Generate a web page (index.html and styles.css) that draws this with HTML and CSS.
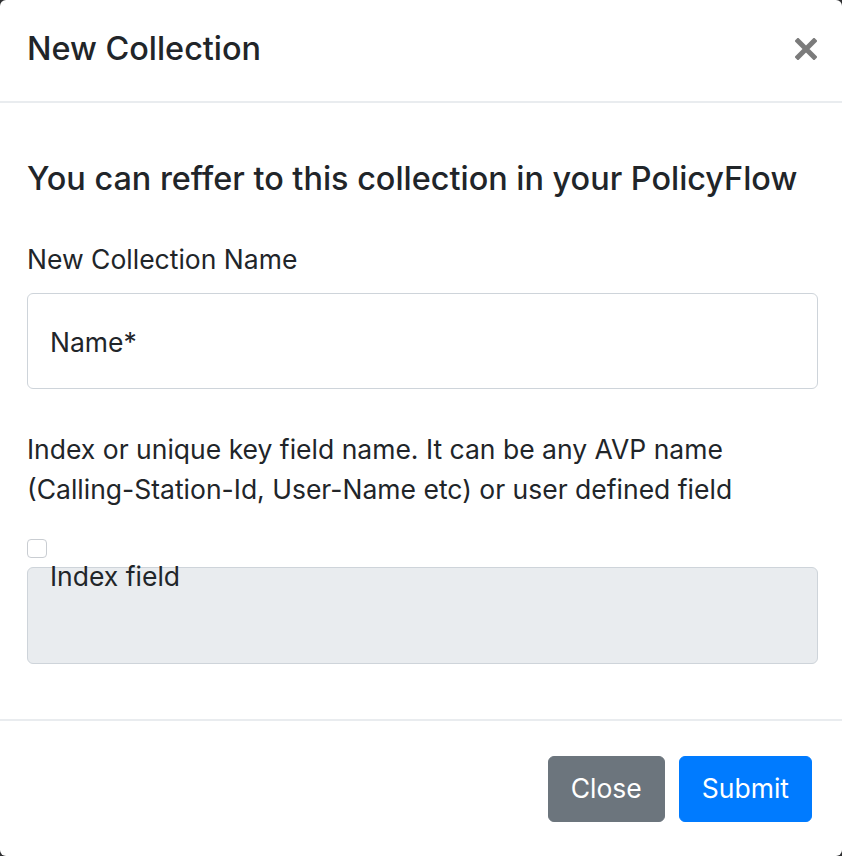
FILE: index.html
```html
<!DOCTYPE html>
<html>
<head>
<meta charset="utf-8">
<title>New Collection</title>
<link rel="stylesheet" href="styles.css">
</head>
<body>
<div class="modal">
  <div class="modal-header">
    <h5 class="modal-title">New Collection</h5>
    <span class="close" title="Close">
      <svg width="22" height="22" viewBox="0 0 22 22"><path d="M3 3 L19 19 M19 3 L3 19" stroke="#7b7b7b" stroke-width="5" stroke-linecap="square" fill="none"/></svg>
    </span>
  </div>

  <div class="modal-body">
    <h4 class="lead-title">You can reffer to this collection in your PolicyFlow</h4>

    <label class="field-label">New Collection Name</label>
    <div class="form-control">Name*</div>

    <p class="hint">Index or unique key field name. It can be any AVP name (Calling-Station-Id, User-Name etc) or user defined field</p>

    <span class="check"></span>
    <div class="form-control readonly">Index field</div>
  </div>

  <div class="modal-footer">
    <button class="btn btn-secondary">Close</button>
    <button class="btn btn-primary">Submit</button>
  </div>
</div>
</body>
</html>
```

FILE: styles.css
```css
html, body {
    margin: 0;
    padding: 0;
    background: #2e2f31;
}

body {
    font-family: Inter, "Noto Sans", sans-serif;
    font-size: 26.5px;
    line-height: 39px;
    color: #212529;
}

.modal {
    width: 842px;
    height: 856px;
    background: #fff;
    border-radius: 6px;
    display: flex;
    flex-direction: column;
    overflow: hidden;
}

.modal-header {
    display: flex;
    align-items: flex-start;
    justify-content: space-between;
    padding: 25px 25px 28px 27px;
    border-bottom: 2px solid #e9ecef;
}

.modal-title {
    margin: 0;
    font-size: 32.4px;
    font-weight: 500;
    line-height: 48px;
}

.close {
    display: block;
    width: 22px;
    height: 22px;
    margin-top: 13px;
    cursor: pointer;
}

.close svg {
    display: block;
}

.modal-body {
    flex: 1;
    padding: 58px 24px 0 27px;
}

.lead-title {
    margin: 0 0 43px;
    font-size: 32.4px;
    font-weight: 500;
    line-height: 36px;
}

.field-label {
    display: block;
    margin-bottom: 14px;
}

.form-control {
    box-sizing: border-box;
    height: 96px;
    padding: 29px 22px 0;
    border: 1px solid #ced4da;
    border-radius: 6px;
    background: #fff;
}

.hint {
    margin: 40px 0 30px;
    line-height: 40px;
}

.check {
    display: block;
    box-sizing: border-box;
    width: 20px;
    height: 19px;
    border: 1px solid #c9cdd2;
    border-radius: 4px;
    margin-bottom: 9px;
}

.form-control.readonly {
    height: 97px;
    background: #e9ecef;
    padding-top: 0;
    line-height: 17px;
}

.modal-footer {
    display: flex;
    justify-content: flex-end;
    gap: 14px;
    padding: 35px 30px 34px;
    border-top: 2px solid #e9ecef;
}

.btn {
    font-family: inherit;
    font-size: 26.5px;
    line-height: 39px;
    padding: 12px 22px 13px;
    border: 1px solid transparent;
    border-radius: 6px;
    color: #fff;
    cursor: pointer;
}

.btn-secondary {
    background: #6c757d;
    border-color: #6c757d;
}

.btn-primary {
    background: #007bff;
    border-color: #007bff;
}
```
